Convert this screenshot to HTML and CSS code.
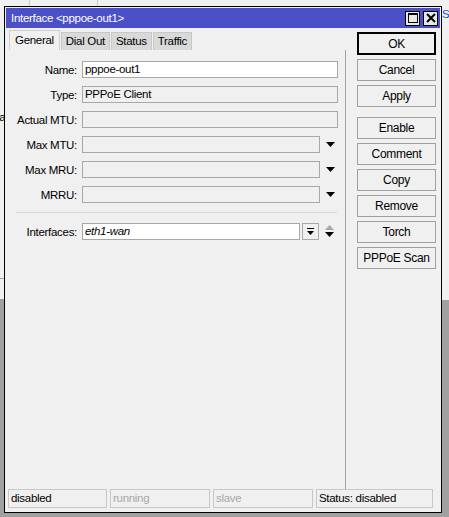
FILE: index.html
```html
<!DOCTYPE html>
<html>
<head>
<meta charset="utf-8">
<link rel="stylesheet" href="styles.css">
</head>
<body>
<div class="desktop">
  <div class="bgtop"></div>
  <div class="bgleft"><span class="frag">la</span></div>
  <div class="bgright"><span class="frag blue">S</span></div>

  <div class="window">
    <div class="titlebar">
      <span class="title">Interface &lt;pppoe-out1&gt;</span>
      <div class="tbtns">
        <span class="tbtn"><svg width="10" height="10" viewBox="0 0 10 10"><rect x="0.5" y="0.5" width="9" height="9" fill="none" stroke="#000"/><line x1="0" y1="1.5" x2="10" y2="1.5" stroke="#000"/></svg></span>
        <span class="tbtn"><svg width="10" height="10" viewBox="0 0 10 10"><path d="M1 1 L9 9 M9 1 L1 9" stroke="#000" stroke-width="2"/></svg></span>
      </div>
    </div>
    <div class="main">
      <div class="leftcol">
        <div class="tabs">
          <span class="tab active">General</span>
          <span class="tab">Dial Out</span>
          <span class="tab">Status</span>
          <span class="tab">Traffic</span>
        </div>
        <div class="panel">
          <div class="form">
            <div class="row"><span class="lbl">Name:</span><span class="inp white">pppoe-out1</span></div>
            <div class="row"><span class="lbl">Type:</span><span class="inp">PPPoE Client</span></div>
            <div class="row"><span class="lbl">Actual MTU:</span><span class="inp"></span></div>
            <div class="row"><span class="lbl">Max MTU:</span><span class="inp short"></span><span class="arrow"><svg width="9" height="5" viewBox="0 0 9 5"><path d="M0 0 H9 L4.5 5 Z" fill="#000"/></svg></span></div>
            <div class="row"><span class="lbl">Max MRU:</span><span class="inp short"></span><span class="arrow"><svg width="9" height="5" viewBox="0 0 9 5"><path d="M0 0 H9 L4.5 5 Z" fill="#000"/></svg></span></div>
            <div class="row"><span class="lbl">MRRU:</span><span class="inp short"></span><span class="arrow"><svg width="9" height="5" viewBox="0 0 9 5"><path d="M0 0 H9 L4.5 5 Z" fill="#000"/></svg></span></div>
            <div class="sep"></div>
            <div class="row"><span class="lbl">Interfaces:</span><span class="inp white shorter ital">eth1-wan</span><span class="dd"><svg width="7" height="8" viewBox="0 0 7 8"><path d="M0 0 H7 V1 H0 Z M0 3 H7 L3.5 7 Z" fill="#000"/></svg></span><span class="updown"><svg width="9" height="13" viewBox="0 0 9 13"><path d="M0 5 L4.5 0 L9 5 Z" fill="#a8a8a8"/><path d="M0 7 H9 L4.5 12 Z" fill="#000"/></svg></span></div>
          </div>
        </div>
      </div>
      <div class="btncol">
        <span class="btn ok">OK</span>
        <span class="btn">Cancel</span>
        <span class="btn">Apply</span>
        <span class="btn gap">Enable</span>
        <span class="btn">Comment</span>
        <span class="btn">Copy</span>
        <span class="btn">Remove</span>
        <span class="btn">Torch</span>
        <span class="btn">PPPoE Scan</span>
      </div>
    </div>
    <div class="statusbar">
      <span class="cell c1">disabled</span>
      <span class="cell c2 dim">running</span>
      <span class="cell c3 dim">slave</span>
      <span class="cell c4">Status: disabled</span>
    </div>
  </div>
</div>
</body>
</html>
```
FILE: styles.css
```css
html, body { margin: 0; padding: 0; }
body {
  width: 449px; height: 517px; overflow: hidden;
  font-family: "Liberation Sans", Arial, sans-serif;
  font-size: 11.5px; letter-spacing: -0.3px; color: #000;
}
.desktop { position: relative; width: 449px; height: 517px; background: #a0a0a0; }
.bgtop { position: absolute; left: 0; top: 0; width: 449px; height: 8px; background: #f0f0f0;
  background-image: linear-gradient(90deg, transparent 0 29px, #c8c8c8 29px 30px, transparent 30px 97px, #c8c8c8 97px 98px, transparent 98px);
}
.bgleft { position: absolute; left: 0; top: 0; width: 5px; height: 300px; background: #f0f0f0; overflow: hidden; }
.bgright { position: absolute; right: 0; top: 0; width: 8px; height: 300px; background: #f0f0f0; overflow: hidden; }
.bgleft .frag { position: absolute; left: -3px; top: 111px; }
.bgright .frag { position: absolute; left: 1px; top: 8px; }
.bgleft::after { content: ""; position: absolute; left: 0; top: 278px; width: 5px; height: 20px; border-top: 1px solid #a0a0a0; border-bottom: 1px solid #a0a0a0; }
.blue { color: #2050c0; }

.window {
  position: absolute; left: 4px; top: 6px; width: 436px; height: 505px;
  background: #f0f0f0; border: 1px solid #000;
  display: flex; flex-direction: column;
}
.titlebar {
  margin: 1px 1px 0 1px; height: 20px; background: #4b50c9;
  display: flex; align-items: center; justify-content: space-between;
  padding: 0 2px 0 5px; color: #fff; white-space: nowrap; font-size: 11.5px;
}
.tbtns { display: flex; gap: 3px; }
.tbtn { width: 13px; height: 13px; background: #e8e8e8; border: 1px solid #000;
  display: flex; align-items: center; justify-content: center; }

.main { display: flex; flex: 1; padding: 3px 0 0 4px; }
.leftcol { width: 337px; display: flex; flex-direction: column; }
.tabs { display: flex; height: 19px; align-items: flex-end; }
.tab { height: 17px; line-height: 17px; padding: 0 4px; background: #d9d9d9;
  border: 1px solid #c8c8c8; border-bottom: none; margin-right: 1px; white-space: nowrap; font-size: 11.5px; }
.tab.active { height: 19px; line-height: 19px; background: #f0f0f0; border-color: #d0d0d0; padding: 0 5px; }
.panel { flex: 1; border-right: 1px solid #a0a0a0; padding-top: 11px; }
.form { display: flex; flex-direction: column; gap: 8px; }
.row { display: flex; align-items: center; height: 17px; }
.lbl { width: 68px; text-align: right; padding-right: 5px; white-space: nowrap; }
.inp { width: 252px; height: 15px; border: 1px solid #a8a8a8; background: #f0f0f0;
  line-height: 15px; padding-left: 2px; white-space: nowrap; }
.inp.white { background: #fff; }
.inp.short { width: 234px; }
.inp.shorter { width: 214px; }
.ital { font-style: italic; }
.arrow { width: 18px; display: flex; justify-content: center; margin-left: 1px; }
.dd { width: 15px; height: 15px; border: 1px solid #a8a8a8; background: #f0f0f0; margin-left: 2px;
  display: flex; align-items: center; justify-content: center; }
.updown { width: 18px; display: flex; justify-content: center; margin-left: 1px; }
.sep { height: 1px; background: #dadada; margin: 1px 8px 2px 7px; }

.btncol { display: flex; flex-direction: column; gap: 4px; padding: 1px 0 0 11px; }
.btn { width: 77px; height: 20px; border: 1px solid #a0a0a0; background: #f0f0f0;
  display: flex; align-items: center; justify-content: center; white-space: nowrap; font-size: 12px; }
.btn.ok { border: 2px solid #000; width: 75px; height: 19px; }
.btn.gap { margin-top: 6px; }

.statusbar { display: flex; gap: 3px; padding: 0 0 4px 3px; height: 19px; }
.cell { box-sizing: border-box; height: 19px; line-height: 17px; border: 1px solid #c8c8c8; padding-left: 2px; white-space: nowrap; }
.c1 { width: 99px; } .c2 { width: 100px; } .c3 { width: 100px; } .c4 { width: 117px; }
.dim { color: #a8a8a8; }
```
